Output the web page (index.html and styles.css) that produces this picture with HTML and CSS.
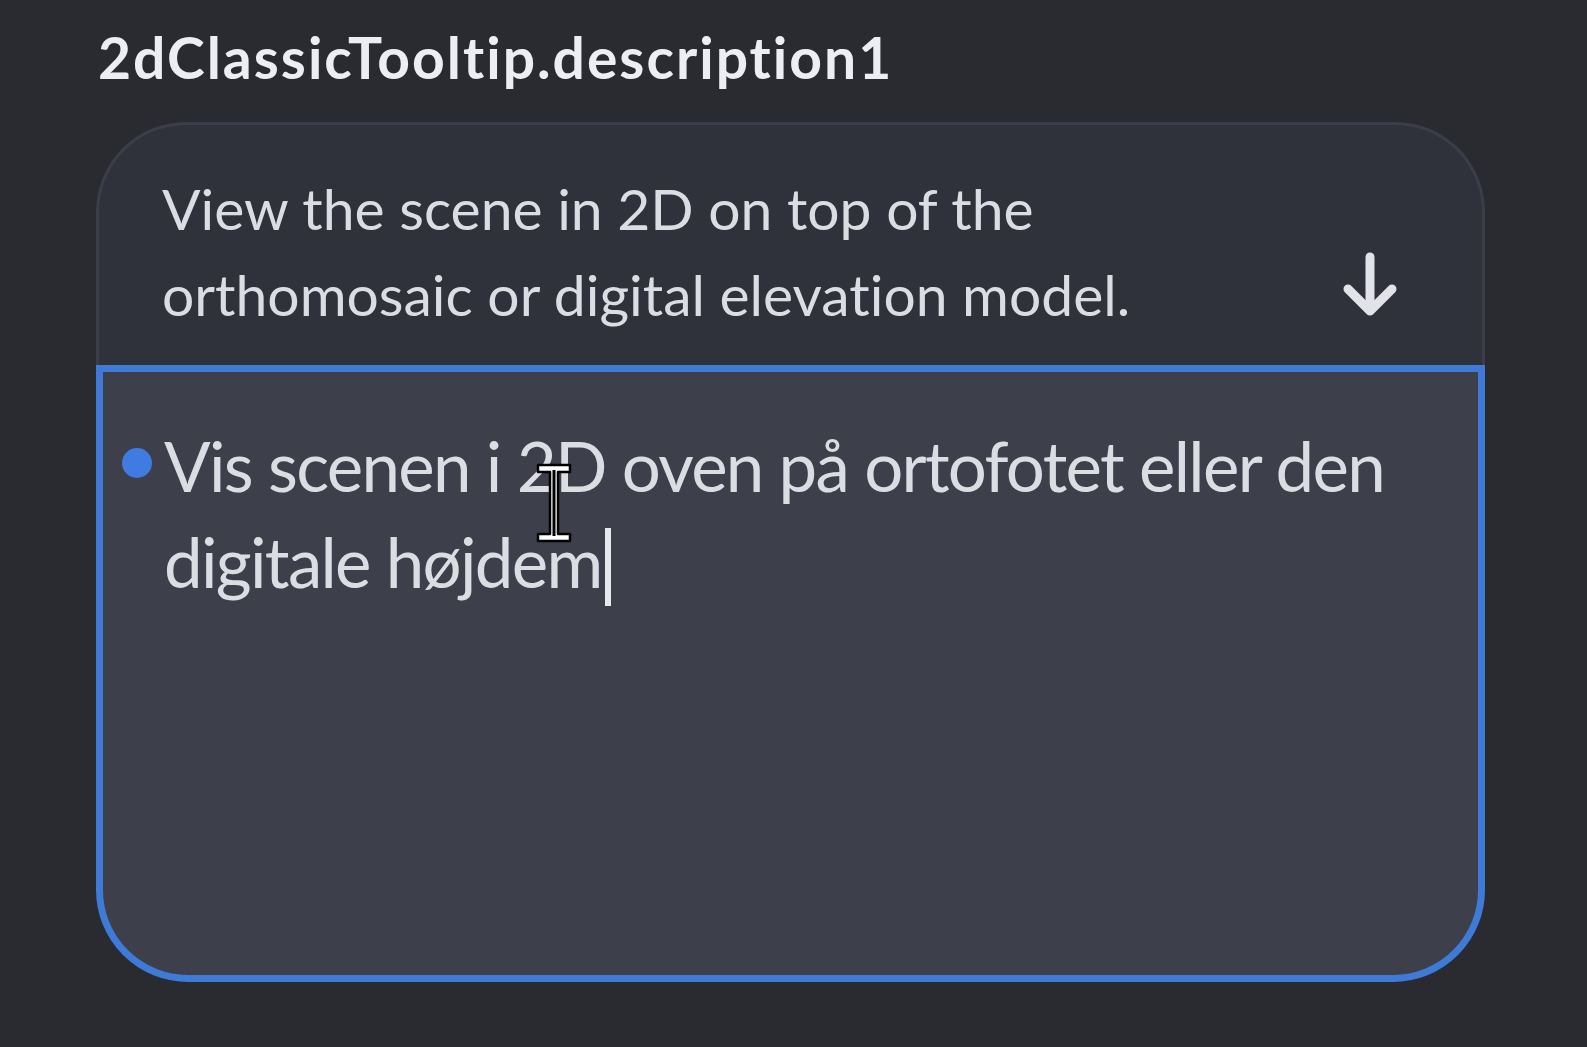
FILE: index.html
```html
<!DOCTYPE html>
<html>
<head>
<meta charset="utf-8">
<link rel="stylesheet" href="styles.css">
</head>
<body>
<div class="page">
  <div class="label">2dClassicTooltip.description1</div>
  <div class="card">
    <div class="source">
      <div class="source-text">View the scene in 2D on top of the orthomosaic or digital elevation model.</div>
      <svg class="arrow" width="56" height="66" viewBox="0 0 56 66" fill="none" stroke="#e2e3e8" stroke-width="9" stroke-linecap="round" stroke-linejoin="round">
        <path d="M28 6 V58"/>
        <path d="M6 38 L28 60 L50 38"/>
      </svg>
    </div>
    <div class="target">
      <span class="dot"></span>
      <div class="target-text">Vis scenen i 2D oven på ortofotet eller den digitale højdem<span class="caret"></span></div>
      <svg class="ibeam" width="38" height="82" viewBox="0 0 38 82">
        <path d="M3 3 H35 V10 H23 V72 H35 V79 H3 V72 H15 V10 H3 Z" fill="#ffffff" stroke="#000" stroke-width="2.5" stroke-linejoin="round"/>
        <path d="M19 8 V74" stroke="#000" stroke-width="3"/>
      </svg>
    </div>
  </div>
</div>
</body>
</html>
```
FILE: styles.css
```css
html, body {
  margin: 0;
  padding: 0;
  background: #292b31;
}
body {
  font-family: Lato, "Open Sans", sans-serif;
  color: #dfe0e6;
  font-variant-ligatures: none;
}
.page {
  width: 1389px;
  padding: 21px 0 0 96px;
}
.label {
  padding-left: 2px;
  font-weight: 700;
  font-size: 57px;
  line-height: 72px;
  color: #eceef2;
  letter-spacing: 2px;
}
.card {
  margin-top: 29px;
}
.source {
  height: 243px;
  box-sizing: border-box;
  background: #30323b;
  border: 3px solid #3b3e48;
  border-bottom: none;
  border-radius: 90px 90px 0 0;
  display: flex;
  align-items: flex-start;
  justify-content: space-between;
  padding: 40px 84px 0 63px;
}
.source-text {
  width: 1040px;
  font-size: 57px;
  line-height: 86px;
  color: #dcdde3;
}
.arrow {
  margin-top: 86px;
}
.target {
  position: relative;
  height: 617px;
  box-sizing: border-box;
  background: #3d3f4b;
  border: 7px solid #3e7ad6;
  border-radius: 0 0 92px 92px;
  padding: 46px 40px 0 61px;
  display: flex;
  align-items: flex-start;
}
.dot {
  position: absolute;
  left: 19px;
  top: 76px;
  width: 30px;
  height: 30px;
  border-radius: 50%;
  background: #3f7be0;
}
.target-text {
  font-size: 69px;
  line-height: 96px;
  color: #dcdde3;
  letter-spacing: -1.7px;
}
.caret {
  display: inline-block;
  width: 6px;
  height: 78px;
  background: #e8e9ee;
  vertical-align: -18px;
  margin-left: 3px;
}
.ibeam {
  position: absolute;
  left: 432px;
  top: 90px;
}
```
